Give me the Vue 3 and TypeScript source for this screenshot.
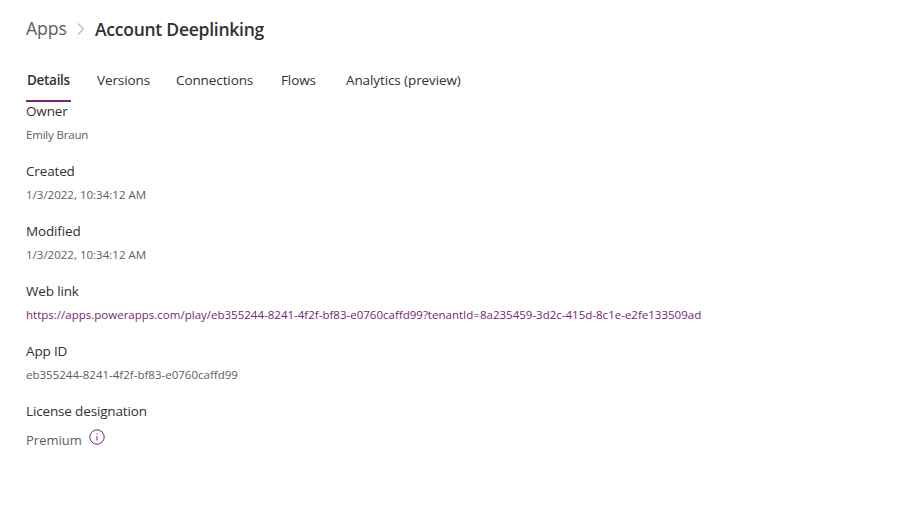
<script setup lang="ts">
interface Field { label: string; value: string; kind?: 'link' | 'license' | 'name' }

const tabs: string[] = ['Details', 'Versions', 'Connections', 'Flows', 'Analytics (preview)']
const fields: Field[] = [
  { label: 'Owner', value: 'Emily Braun', kind: 'name' },
  { label: 'Created', value: '1/3/2022, 10:34:12 AM' },
  { label: 'Modified', value: '1/3/2022, 10:34:12 AM' },
  { label: 'Web link', value: 'https://apps.powerapps.com/play/eb355244-8241-4f2f-bf83-e0760caffd99?tenantId=8a235459-3d2c-415d-8c1e-e2fe133509ad', kind: 'link' },
  { label: 'App ID', value: 'eb355244-8241-4f2f-bf83-e0760caffd99' },
  { label: 'License designation', value: 'Premium', kind: 'license' },
]
</script>

<template>
  <main class="page">
    <nav class="crumbs">
      <span class="parent">Apps</span>
      <svg class="chevron" viewBox="0 0 8 12"><path d="M1 .5L6.5 6 1 11.5" /></svg>
      <h1 class="current">Account Deeplinking</h1>
    </nav>
    <div class="tabs" role="tablist">
      <button v-for="(t, i) in tabs" :key="t" class="tab" :class="{ active: i === 0 }" role="tab">{{ t }}</button>
    </div>
    <dl class="fields">
      <div v-for="f in fields" :key="f.label" class="field">
        <dt>{{ f.label }}</dt>
        <dd :class="f.kind">
          <a v-if="f.kind === 'link'">{{ f.value }}</a>
          <span v-else>{{ f.value }}</span>
          <svg v-if="f.kind === 'license'" class="info" viewBox="0 0 16 16"><circle cx="8" cy="8" r="7.2" /><path d="M8 7v4.5M8 4.4v1.2" /></svg>
        </dd>
      </div>
    </dl>
  </main>
</template>

<style>
body { margin: 0; background: #fff; }
</style>
<style scoped>
.page { padding: 14px 26px; font-family: "Open Sans", "Noto Sans", sans-serif; color: #323130; }
.crumbs { display: flex; align-items: center; height: 29px; }
.parent { width: 41px; margin-bottom: 2px; font-size: 17.7px; letter-spacing: -0.1px; color: #605e5c; }
.chevron { width: 8px; height: 12px; margin: 0 10px; fill: none; stroke: #8a8886; }
.current { margin: 0; font-size: 17.5px; font-weight: 600; letter-spacing: -0.25px; }
.tabs { display: grid; grid-template-columns: 70px 79px 105px 65px auto; justify-items: start; margin-top: 17px; }
.tab { border: 0; border-bottom: 2px solid transparent; background: none; padding: 0 1px; height: 42px; font: 13.5px/40px "Open Sans", "Noto Sans", sans-serif; letter-spacing: -0.1px; color: #323130; white-space: nowrap; }
.active { font-weight: 600; letter-spacing: -0.3px; border-color: #742774; }
.fields { margin: 0; }
.field { height: 60px; }
dt { font-size: 13.5px; line-height: 18px; letter-spacing: -0.15px; }
dd { margin: 6px 0 0; font-size: 11.52px; line-height: 18px; color: #605e5c; display: flex; white-space: nowrap; }
.name { letter-spacing: -0.2px; }
.link { color: #742774; }
.license { font-size: 13px; margin-top: 11px; }
.info { width: 16px; height: 16px; margin: -2px 0 0 7px; fill: none; stroke: #742774; }
</style>
